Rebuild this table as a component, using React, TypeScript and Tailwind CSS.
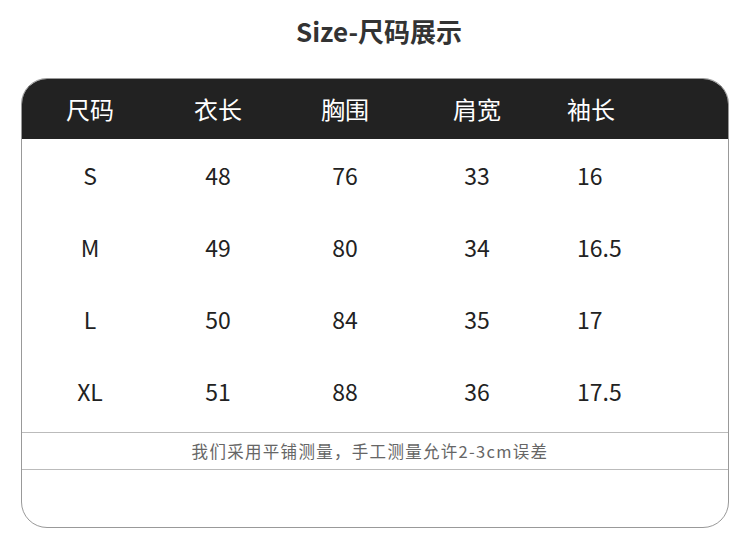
import React from "react";

const rows = [
  ["S", "48", "76", "33", "16"],
  ["M", "49", "80", "34", "16.5"],
  ["L", "50", "84", "35", "17"],
  ["XL", "51", "88", "36", "17.5"],
];

const headers = ["尺码", "衣长", "胸围", "肩宽", "袖长"];

export default function App() {
  return (
    <div
      className="w-[750px] h-[558px] bg-white flex flex-col"
      style={{ fontFamily: '"Noto Sans CJK SC", "Noto Sans", sans-serif' }}
    >
      <div className="h-[78px] flex items-start justify-center pt-[11px]">
        <h1 className="text-[26px] font-bold text-[#333] leading-[40px] pl-[8px]">Size-尺码展示</h1>
      </div>
      <div className="mx-[21px] w-[708px] h-[450px] border border-[#999] rounded-[26px] overflow-hidden flex flex-col">
        <div className="h-[60px] bg-[#222] grid grid-cols-[136px_120px_134px_130px_1fr] items-center text-white text-[24px]">
          {headers.map((h, i) => (
            <div key={h} className={i === 4 ? "pl-[25px]" : "text-center"}>
              {h}
            </div>
          ))}
        </div>
        <div className="pb-[5px]">
          {rows.map((r) => (
            <div
              key={r[0]}
              className="h-[72px] grid grid-cols-[136px_120px_134px_130px_1fr] items-center text-[#222] text-[23px]"
            >
              {r.map((c, i) => (
                <div key={i} className={i === 4 ? "pl-[35px]" : "text-center"}>
                  {c}
                </div>
              ))}
            </div>
          ))}
        </div>
        <div className="h-[38px] border-t border-b border-[#bbb] flex items-center justify-center pr-[10px] text-[16.5px] tracking-[1.3px] text-[#666]">
          我们采用平铺测量，手工测量允许2-3cm误差
        </div>
      </div>
    </div>
  );
}
